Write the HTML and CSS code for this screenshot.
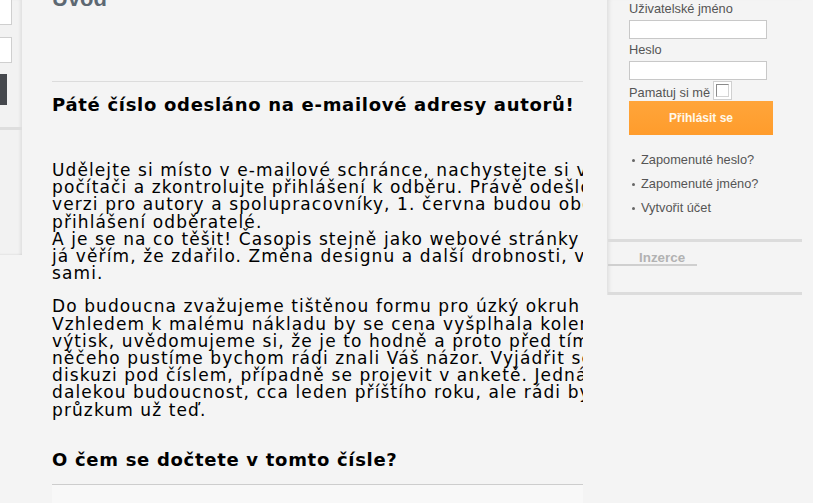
FILE: index.html
```html
<!DOCTYPE html>
<html lang="cs">
<head>
<meta charset="utf-8">
<title>Úvod</title>
<link rel="stylesheet" href="styles.css">
</head>
<body>
<div class="page">
  <aside class="left">
    <div class="left-inner">
      <span class="field first"></span>
      <span class="field"></span>
      <span class="dark-btn"></span>
      <span class="left-rule"></span>
    </div>
  </aside>

  <main class="main">
    <h1 class="title">Úvod</h1>
    <hr class="rule">
    <h2 class="heading h-first">Páté číslo odesláno na e-mailové adresy autorů!</h2>
    <p class="text">Udělejte si místo v e-mailové schránce, nachystejte si váš<br>počítači a zkontrolujte přihlášení k odběru. Právě odešlo<br>verzi pro autory a spolupracovníky, 1. června budou obdrží<br>přihlášení odběratelé.<br>A je se na co těšit! Časopis stejně jako webové stránky<br>já věřím, že zdařilo. Změna designu a další drobnosti, vše<br>sami.</p>
    <p class="text">Do budoucna zvažujeme tištěnou formu pro úzký okruh<br>Vzhledem k malému nákladu by se cena vyšplhala kolem<br>výtisk, uvědomujeme si, že je to hodně a proto před tím<br>něčeho pustíme bychom rádi znali Váš názor. Vyjádřit se<br>diskuzi pod číslem, případně se projevit v anketě. Jedná<br>dalekou budoucnost, cca leden příštího roku, ale rádi bychom<br>průzkum už teď.</p>
    <h2 class="heading h-second">O čem se dočtete v tomto čísle?</h2>
    <div class="box"></div>
  </main>

  <aside class="right">
    <form class="login">
      <label class="lbl">Uživatelské jméno</label>
      <span class="input"></span>
      <label class="lbl">Heslo</label>
      <span class="input"></span>
      <div class="remember">
        <span class="lbl">Pamatuj si mě</span>
        <span class="check"><span class="check-in"></span></span>
      </div>
      <span class="submit">Přihlásit se</span>
    </form>
    <ul class="links">
      <li><span class="dot"></span>Zapomenuté heslo?</li>
      <li><span class="dot"></span>Zapomenuté jméno?</li>
      <li><span class="dot"></span>Vytvořit účet</li>
    </ul>
    <div class="sep"></div>
    <h3 class="ads">Inzerce</h3>
    <div class="sep bottom"></div>
  </aside>
</div>
</body>
</html>
```

FILE: styles.css
```css
html, body {
  margin: 0;
  padding: 0;
  background: #f4f4f4;
}

.page {
  display: flex;
  align-items: flex-start;
  width: 813px;
  height: 503px;
  overflow: hidden;
  background: #f4f4f4;
}

/* left sidebar (mostly off-screen) */
.left {
  flex: 0 0 22px;
  width: 22px;
  height: 255px;
  overflow: hidden;
  background: #f2f2f2;
  box-shadow: inset -3px 0 3px -1px rgba(0, 0, 0, 0.07), inset 0 -2px 2px -1px rgba(0, 0, 0, 0.05);
}

.left-inner {
  display: flex;
  flex-direction: column;
  align-items: flex-end;
  width: 22px;
}

.field {
  display: block;
  flex: 0 0 auto;
  width: 140px;
  height: 24px;
  margin-right: 10px;
  background: #fff;
  border: 1px solid #cfcfcf;
  margin-top: 12px;
}

.field.first {
  margin-top: -1px;
}

.dark-btn {
  display: block;
  flex: 0 0 auto;
  width: 140px;
  height: 31px;
  margin-top: 11px;
  margin-right: 15px;
  background: #45484d;
}

.left-rule {
  display: block;
  align-self: stretch;
  height: 3px;
  margin-top: 22px;
  background: #dedede;
}

/* main column */
.main {
  flex: 0 0 531px;
  width: 531px;
  height: 503px;
  padding: 0 0 0 30px;
  margin-right: 24px;
  overflow: hidden;
  font-family: "DejaVu Sans", Verdana, sans-serif;
  color: #000;
}

.title {
  margin: -14px 0 0;
  font-family: "Liberation Sans", Arial, sans-serif;
  font-weight: bold;
  font-size: 22px;
  line-height: 26px;
  color: #5d6872;
}

.rule {
  margin: 69px 0 0;
  border: 0;
  border-top: 1px solid #dcdcdc;
  height: 0;
}

.heading {
  margin: 0;
  font-size: 18px;
  line-height: 22px;
  font-weight: bold;
  letter-spacing: 0.7px;
  white-space: nowrap;
}

.h-first {
  margin-top: 12px;
}

.h-second {
  margin-top: 30px;
}

.text {
  margin: 0 0 16px;
  font-size: 17px;
  line-height: 17.2px;
  letter-spacing: 1.1px;
  white-space: nowrap;
}

.h-first + .text {
  margin-top: 46px;
}

.box {
  margin-top: 13px;
  height: 40px;
  border-top: 1px solid #cdcdcd;
  background: #f8f8f8;
}

/* right sidebar */
.right {
  flex: 0 0 195px;
  width: 195px;
  height: 295px;
  box-shadow: inset 5px 0 4px -3px rgba(0, 0, 0, 0.09);
  font-family: "Liberation Sans", Arial, sans-serif;
  font-size: 12.8px;
  color: #555;
}

.login {
  display: flex;
  flex-direction: column;
  align-items: flex-start;
  padding: 2px 0 0 22px;
  margin: 0;
}

.lbl {
  display: block;
  line-height: 14px;
  color: #555;
}

.login > .lbl + .input {
  margin-top: 4px;
}

.login > .input + .lbl {
  margin-top: 4px;
}

.input {
  display: block;
  width: 136px;
  height: 17px;
  background: #fff;
  border: 1px solid #c8c8c8;
}

.remember {
  display: flex;
  align-items: flex-end;
  gap: 3px;
  margin-top: 1px;
  height: 19px;
}

.check {
  display: flex;
  align-items: center;
  justify-content: center;
  box-sizing: border-box;
  width: 19px;
  height: 19px;
  background: #fff;
  border: 1px solid #d0d0d0;
}

.check-in {
  display: block;
  box-sizing: border-box;
  width: 13px;
  height: 13px;
  border: 1px solid #8a8a8a;
  border-right-color: #d4d4d4;
  border-bottom-color: #d4d4d4;
  background: #fff;
}

.submit {
  display: flex;
  align-items: center;
  justify-content: center;
  width: 144px;
  height: 34px;
  margin-top: 1px;
  background: linear-gradient(#ffa53a, #ff9c2c);
  color: #fff8ea;
  font-weight: bold;
  font-size: 12px;
}

.links {
  list-style: none;
  margin: 18px 0 0;
  padding: 0 0 0 25px;
  display: flex;
  flex-direction: column;
  gap: 10px;
}

.links li {
  display: flex;
  align-items: center;
  line-height: 14px;
  color: #555;
}

.dot {
  display: block;
  width: 3px;
  height: 3px;
  border-radius: 50%;
  background: #666;
  margin-right: 6px;
  margin-top: 1px;
}

.sep {
  height: 3px;
  margin-top: 24px;
  margin-left: 1px;
  background: #dcdcdc;
}

.ads {
  width: 58px;
  margin: 10px 0 0 1px;
  padding-left: 31px;
  font-size: 13.4px;
  line-height: 12px;
  font-weight: bold;
  color: #b2b2b2;
  border-bottom: 2px solid #cfcfcf;
}

.sep.bottom {
  margin-top: 26px;
}
```
